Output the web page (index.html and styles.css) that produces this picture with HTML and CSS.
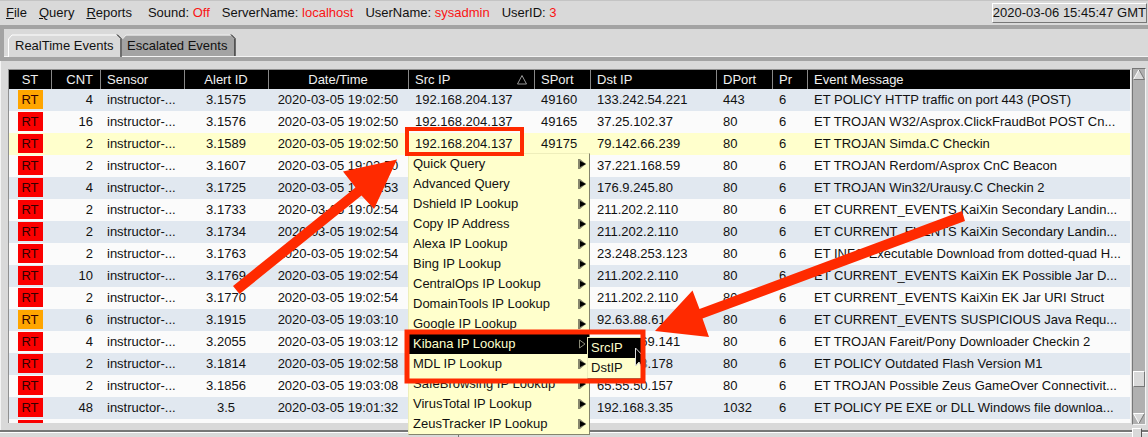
FILE: index.html
```
<!DOCTYPE html>
<html lang="en">
<head>
<meta charset="utf-8">
<title>Sguil</title>
<link rel="stylesheet" href="styles.css">
</head>
<body>
<div class="app">
  <header class="menubar">
    <nav class="menus">
      <button type="button"><u>F</u>ile</button>
      <button type="button"><u>Q</u>uery</button>
      <button type="button"><u>R</u>eports</button>
    </nav>
    <div class="session">
      <span>Sound: <b>Off</b></span>
      <span>ServerName: <b>localhost</b></span>
      <span>UserName: <b>sysadmin</b></span>
      <span>UserID: <b>3</b></span>
    </div>
    <time class="clock">2020-03-06 15:45:47 GMT</time>
  </header>

  <div class="tabs">
    <button type="button" class="tab active">
      <svg viewBox="0 0 114 23" preserveAspectRatio="none" aria-hidden="true"><path d="M.5 23V5L4 1.5H109L112.500 5V23" fill="#d9d9d9"/><path d="M.5 23V5L4 1H109" fill="none" stroke="#fff"/><path d="M109 .5L113 4.500V23" fill="none" stroke="#000"/></svg>
      <span>RealTime Events</span>
    </button>
    <button type="button" class="tab">
      <svg viewBox="0 0 114 23" preserveAspectRatio="none" aria-hidden="true"><path d="M0 22V5L4 1.500H109L113 5V22" fill="#a3a3a3"/><path d="M.5 5L4 1H109" fill="none" stroke="#ececec"/><path d="M109 .5L113 4.500V22" fill="none" stroke="#000"/></svg>
      <span>Escalated Events</span>
    </button>
  </div>

  <main class="pane">
    <div class="grid">
      <table>
        <colgroup><col class="w-st"><col class="w-cnt"><col class="w-id"><col class="w-id"><col class="w-date"><col class="w-ip"><col class="w-port"><col class="w-ip"><col class="w-port"><col class="w-pr"><col></colgroup>
        <thead><tr><th class="c">ST</th><th class="r">CNT</th><th>Sensor</th><th class="c">Alert ID</th><th class="c">Date/Time</th><th><div class="sorted">Src IP <svg width="10" height="10" viewBox="0 0 10 10" aria-hidden="true"><path d="M.5 9L5 .5L9.500 9Z" fill="none" stroke="#999"/></svg></div></th><th>SPort</th><th>Dst IP</th><th>DPort</th><th>Pr</th><th>Event Message</th></tr></thead>
        <tbody id="rows"></tbody>
      </table>
    </div>
    <div class="scrollbar">
      <svg width="12" height="11" viewBox="0 0 12 11" aria-hidden="true"><path d="M6 .5L11.500 10.500H.5Z" fill="#d9d9d9"/><path d="M.5 10.500L6 .5" stroke="#fff"/><path d="M6 .5L11.500 10.500H.5" fill="none" stroke="#777"/></svg>
      <div class="trough"><div class="thumb"></div></div>
      <svg width="12" height="11" viewBox="0 0 12 11" aria-hidden="true"><path d="M.5 .5H11.500L6 10.500Z" fill="#d9d9d9"/><path d="M11.500 .5H.5L6 10.500" fill="none" stroke="#fff"/><path d="M11.500 .5L6 10.500" stroke="#777"/></svg>
    </div>
  </main>
  <footer class="status"><span></span><i class="sash"></i></footer>

  <ul class="popup lookup" id="lookup"></ul>
  <ul class="popup sub">
    <li><button type="button" class="on">SrcIP</button></li>
    <li><button type="button">DstIP</button></li>
  </ul>

  <svg class="marks" width="1148" height="437" viewBox="0 0 1148 437" aria-hidden="true">
    <path d="M635.500 348V366L639 362L642 368H646V359Z" fill="#000" stroke="#ddd"/>
    <g fill="none" stroke="#ff2a00">
      <rect x="407" y="129" width="115" height="25" stroke-width="4"/>
      <rect x="407" y="332" width="236" height="49" stroke-width="5"/>
    </g>
    <g fill="#ff2a00">
      <path d="M233 286L355.500 187.500L343 171.500L397 159.500L374 209L361.500 195.500L239.500 294Z"/>
      <path d="M962 211L699.500 309L692.500 290.500L655 331L709 337L702.500 318.500L965 221Z"/>
    </g>
  </svg>
</div>
<script src="app.js"></script>
</body>
</html>
```

FILE: styles.css
```
* { box-sizing: border-box; }

body {
  margin: 0;
  background: #d9d9d9;
  color: #111;
  font: 13px/16px "Liberation Sans", Arial, sans-serif;
}

button {
  margin: 0;
  padding: 0;
  border: 0;
  background: none;
  color: inherit;
  font: inherit;
  text-align: left;
}

.app {
  position: relative;
  display: flex;
  flex-direction: column;
  height: 100vh;
  overflow: hidden;
}

.menubar {
  display: flex;
  align-items: center;
  height: 25px;
  padding: 0 1px 0 6px;
  border-top: 1px solid #c4c4c4;
  white-space: nowrap;
}

.menus, .session { display: flex; gap: 12px; }
.session { margin-left: 16px; }
.session b { color: #f91414; font-weight: normal; }

.clock {
  margin-left: auto;
  padding: 1px 0;
  border: 1px solid;
  border-color: #fff #777 #777 #fff;
}

.tabs {
  display: flex;
  align-items: flex-end;
  height: 36px;
  padding-left: 4px;
  border: solid #a3a3a3;
  border-width: 4px 0 4px 4px;
  box-shadow: inset 0 -1px #f4f4f4;
}

.tab {
  position: relative;
  width: 114px;
  height: 23px;
  padding-left: 7px;
  white-space: nowrap;
}

.tab svg {
  position: absolute;
  inset: 0;
  width: 100%;
  height: 100%;
}

.tab span { position: relative; }
.tab + .tab { padding-left: 5px; }

.pane {
  display: flex;
  flex: 1;
  gap: 1px;
  min-height: 0;
  padding: 7px 2px 5px 8px;
  border-left: 1px solid #f4f4f4;
}

.grid {
  flex: 1;
  min-width: 0;
  margin: 1px 0 2px -1px;
  border: 1px solid #909090;
  border-bottom: 0;
  border-right-color: #f4f4f4;
  background: #fbfbfb;
  overflow: hidden;
}

table {
  width: 100%;
  border-collapse: collapse;
  table-layout: fixed;
}

.w-st { width: 42px; }
.w-cnt { width: 49px; }
.w-id { width: 84px; }
.w-date { width: 140px; }
.w-ip { width: 126px; }
.w-port { width: 56px; }
.w-pr { width: 35px; }

th, td {
  padding: 0 7px;
  font-weight: normal;
  text-align: left;
  white-space: nowrap;
}

th {
  height: 19px;
  background: #000;
  box-shadow: inset 1px 0 #888;
  color: #f0f0f0;
}

th:first-child { box-shadow: none; }
td { height: 22px; overflow: hidden; }
.c { padding: 0; text-align: center; }
.r { text-align: right; }
tbody tr:nth-child(odd) { background: #e1e8f0; }
tbody tr.selected { background: #ffffcc; }
.sorted { display: flex; align-items: center; justify-content: space-between; }
td:first-child { vertical-align: top; }

.badge {
  display: block;
  width: 25px;
  height: 19px;
  margin: 1px auto 0;
  background: #fb0000;
  color: #300;
  line-height: 19px;
}

.badge.orange { background: #ffa500; }

.scrollbar {
  display: flex;
  flex-direction: column;
  width: 14px;
  border: 1px solid;
  border-color: #777 #f4f4f4 #f4f4f4 #777;
  background: #b0b0b0;
}

.scrollbar svg { flex: none; }
.trough { display: flex; flex: 1; flex-direction: column; }

.thumb {
  height: 16px;
  margin: auto 0 26px;
  border: 1px solid;
  border-color: #fff #777 #777 #fff;
  background: #d9d9d9;
}

.status {
  display: flex;
  justify-content: space-between;
  height: 7px;
  border-top: 2px solid #777;
  box-shadow: inset 0 1px #fff;
}

.status span { width: 40%; border-right: 1px solid #777; }

.sash {
  width: 10px;
  height: 10px;
  margin: -4px 6px 0 0;
  border: 1px solid;
  border-color: #fff #555 #555 #fff;
  background: #d9d9d9;
}

.popup {
  position: absolute;
  margin: 0;
  padding: 0;
  border: 1px solid;
  border-color: #eeeebb #85856c #85856c #eeeebb;
  background: #ffffcc;
  list-style: none;
}

.lookup { left: 408px; top: 153px; width: 182px; }
.sub { left: 587px; top: 337px; width: 56px; }

.popup button {
  display: flex;
  align-items: center;
  justify-content: space-between;
  width: 100%;
  height: 20px;
  padding: 0 3px 0 4px;
}

.sub button { padding-left: 3px; }
.popup .on { background: #000; color: #ffffcc; }

.marks { position: absolute; left: 0; top: 0; pointer-events: none; }
```

FILE: app.js
```
const SRC = "192.168.204.137";
const events = [
  [4, "3.1575", "19:02:50", "49160", "133.242.54.221", 443, "ET POLICY HTTP traffic on port 443 (POST)", "orange"],
  [16, "3.1576", "19:02:50", "49165", "37.25.102.37", 80, "ET TROJAN W32/Asprox.ClickFraudBot POST Cn..."],
  [2, "3.1589", "19:02:50", "49175", "79.142.66.239", 80, "ET TROJAN Simda.C Checkin"],
  [2, "3.1607", "19:02:50", "", "37.221.168.59", 80, "ET TROJAN Rerdom/Asprox CnC Beacon"],
  [4, "3.1725", "19:02:53", "", "176.9.245.80", 80, "ET TROJAN Win32/Urausy.C Checkin 2"],
  [2, "3.1733", "19:02:54", "", "211.202.2.110", 80, "ET CURRENT_EVENTS KaiXin Secondary Landin..."],
  [2, "3.1734", "19:02:54", "", "211.202.2.110", 80, "ET CURRENT_EVENTS KaiXin Secondary Landin..."],
  [2, "3.1763", "19:02:54", "", "23.248.253.123", 80, "ET INFO Executable Download from dotted-quad H..."],
  [10, "3.1769", "19:02:54", "", "211.202.2.110", 80, "ET CURRENT_EVENTS KaiXin EK Possible Jar D..."],
  [2, "3.1770", "19:02:54", "", "211.202.2.110", 80, "ET CURRENT_EVENTS KaiXin EK Jar URI Struct"],
  [6, "3.1915", "19:03:10", "", "92.63.88.61", 80, "ET CURRENT_EVENTS SUSPICIOUS Java Requ...", "orange"],
  [4, "3.2055", "19:03:12", "", "95.163.69.141", 80, "ET TROJAN Fareit/Pony Downloader Checkin 2"],
  [2, "3.1814", "19:02:58", "", "188.40.8.178", 80, "ET POLICY Outdated Flash Version M1"],
  [2, "3.1856", "19:03:08", "", "65.55.50.157", 80, "ET TROJAN Possible Zeus GameOver Connectivit..."],
  [48, "3.5", "19:01:32", "", "192.168.3.35", 1032, "ET POLICY PE EXE or DLL Windows file downloa..."]
];

const badge = (color) => `<td class="c"><span class="badge ${color || ""}">RT</span></td>`;

document.getElementById("rows").innerHTML = events.map((e, i) => {
  const [cnt, id, time, sport, dst, dport, message, color] = e;
  return `<tr class="${i === 2 ? "selected" : ""}">${badge(color)}
    <td class="r">${cnt}</td><td>instructor-...</td><td class="c">${id}</td>
    <td class="c">2020-03-05 ${time}</td><td>${sport ? SRC : ""}</td><td>${sport}</td>
    <td>${dst}</td><td>${dport}</td><td>6</td><td>${message}</td></tr>`;
}).join("") + `<tr class="last">${badge("").replace("RT", "&nbsp;")}<td colspan="10"></td></tr>`;

const items = ["Quick Query", "Advanced Query", "Dshield IP Lookup", "Copy IP Address",
  "Alexa IP Lookup", "Bing IP Lookup", "CentralOps IP Lookup", "DomainTools IP Lookup",
  "Google IP Lookup", "Kibana IP Lookup", "MDL IP Lookup", "SafeBrowsing IP Lookup",
  "VirusTotal IP Lookup", "ZeusTracker IP Lookup"];

document.getElementById("lookup").innerHTML = items.map((name) => {
  const on = name.startsWith("Kibana");
  const arrow = on
    ? `<path d="M1.500 1L7 5L1.500 9Z" fill="none" stroke="#8a8a78"/>`
    : `<path d="M0 0H2L8 5L2 10H0Z" fill="#85856c"/><path d="M2 2L8 5L2 8Z" fill="#000"/>`;
  return `<li><button type="button" class="${on ? "on" : ""}">${name}
    <svg width="8" height="10" viewBox="0 0 8 10" aria-hidden="true">${arrow}</svg></button></li>`;
}).join("");
```
